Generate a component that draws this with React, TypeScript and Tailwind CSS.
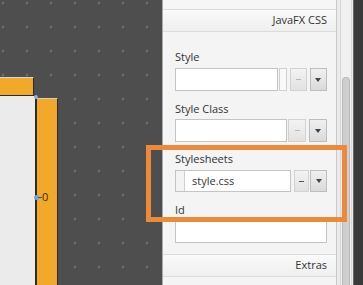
import React from 'react'

const FONT = "font-['Open_Sans','Noto_Sans',sans-serif]"

function Label({ text }: { text: string }) {
  return <div className="h-[14px] text-[11px] leading-[14px] text-[#333]">{text}</div>
}

function MinusButton({ w = 17, active = false }: { w?: number; active?: boolean }) {
  return (
    <div
      className="flex h-full items-center justify-center border border-[#d2d2d2] bg-gradient-to-b from-[#f3f3f3] to-[#e2e2e2]"
      style={{ width: w }}
    >
      <div className={`h-px w-[5px] ${active ? 'bg-[#555]' : 'bg-[#b8b8b8]'}`} />
    </div>
  )
}

function DropButton({ w = 18 }: { w?: number }) {
  return (
    <div
      className="flex h-full items-center justify-center border border-[#bdbdbd] bg-gradient-to-b from-[#f0f0f0] to-[#dadada]"
      style={{ width: w }}
    >
      <div className="h-0 w-0 border-x-[3px] border-t-[4px] border-x-transparent border-t-[#444]" />
    </div>
  )
}

function SectionHeader({ title }: { title: string }) {
  return (
    <div className="flex h-[23px] items-center justify-end border-y border-[#dcdcdc] bg-gradient-to-b from-[#fafafa] to-[#efefef] pr-[9px] text-[11px] text-[#333]">
      {title}
    </div>
  )
}

export default function App() {
  return (
    <div className={`relative flex h-[285px] w-[363px] overflow-hidden ${FONT}`}>
      {/* canvas */}
      <div className="relative h-full w-[162px] bg-[#4e4e4e] bg-[radial-gradient(circle,#6c6c6c_1px,transparent_1.7px)] bg-[length:24px_24px] bg-[position:-9px_-9px]">
        <div className="absolute left-0 top-[77px] h-[19px] w-[34px] border-b border-r border-t border-b-[#2b2b2b] border-r-[#2b2b2b] border-t-[#d9d9d9] bg-[#f2a92a]" />
        <div className="absolute left-0 top-[96px] bottom-0 w-[36px] border-r border-[#2b2b2b] bg-[#ebebeb]" />
        <div className="absolute left-[36px] top-[98px] bottom-0 w-[22px] border-x border-t border-x-[#2b2b2b] border-t-[#cfcfcf] bg-[#f2a92a]" />
        <div className="absolute left-[34px] top-[95px] h-[4px] w-[4px] rounded-full bg-[#7fb2e0]" />
        <div className="absolute left-[34px] top-[195px] h-[5px] w-[5px] rounded-full bg-[#6fa6dc]" />
        <div className="absolute left-[38px] top-[197px] h-px w-[4px] bg-[#3a5a7a]" />
        <div className="absolute left-[42px] top-[190px] text-[11px] leading-[14px] text-[#3a2a10]">0</div>
      </div>

      {/* properties panel */}
      <div className="flex h-full w-[191px] border-l border-[#a9a9a9]">
        <div className="flex w-[174px] flex-col border-r border-[#c9c9c9] bg-[#f4f4f4]">
          <div className="h-[8px] bg-[#f6f6f6]" />
          <div className="h-px" />
          <SectionHeader title="JavaFX CSS" />
          <div className="flex flex-col pl-[12px] pr-[9px]">
            <div className="h-[18px]" />
            <Label text="Style" />
            <div className="mt-[4px] flex h-[23px] gap-[1px]">
              <div className="w-[107px] border border-[#c4c4c4] bg-white" />
              <div className="w-[8px] border border-[#d0d0d0] bg-[#f9f9f9]" />
              <div className="w-[1px]" />
              <MinusButton w={17} />
              <div className="w-[1px]" />
              <DropButton w={18} />
            </div>

            <div className="mt-[11px]">
              <Label text="Style Class" />
            </div>
            <div className="mt-[3px] flex h-[23px] gap-[1px]">
              <div className="w-[114px] border border-[#c4c4c4] bg-white" />
              <MinusButton w={18} />
              <div className="w-[1px]" />
              <DropButton w={18} />
            </div>

            <div className="mt-[10px]">
              <Label text="Stylesheets" />
            </div>
            <div className="mt-[4px] flex h-[22px] gap-[1px]">
              <div className="flex w-[116px] border border-[#c4c4c4] bg-white">
                <div className="w-[9px] border-r border-[#cfcfcf] bg-[#f3f3f3]" />
                <div className="pl-[7px] text-[11px] leading-[20px] text-[#333]">style.css</div>
              </div>
              <div className="w-[1px]" />
              <MinusButton w={15} active />
              <DropButton w={17} />
            </div>

            <div className="mt-[11px]">
              <Label text="Id" />
            </div>
            <div className="mt-[4px] h-[22px] border border-[#c4c4c4] bg-white" />
            <div className="h-[11px]" />
          </div>
          <SectionHeader title="Extras" />
          <div className="flex-1 bg-[#f4f4f4]" />
        </div>

        {/* scrollbar */}
        <div className="flex w-[16px] bg-[#ebebeb] pl-[3px] pr-[1px]">
          <div className="flex w-full flex-col border-x border-[#d8d8d8] bg-[#f0f0f0] px-[1px]">
            <div className="h-[77px]" />
            <div className="flex-1 rounded-t-[6px] border border-b-0 border-[#b9b9b9] bg-[#cfcfcf]" />
          </div>
        </div>
      </div>

      {/* dark edge */}
      <div className="h-full flex-1 border-l border-[#6a6a6a] bg-[#3a3a3a]" />

      {/* annotation highlight */}
      <div className="absolute left-[146px] top-[145px] h-[77px] w-[201px] border-[5px] border-[#ec8a3b]" />
    </div>
  )
}
